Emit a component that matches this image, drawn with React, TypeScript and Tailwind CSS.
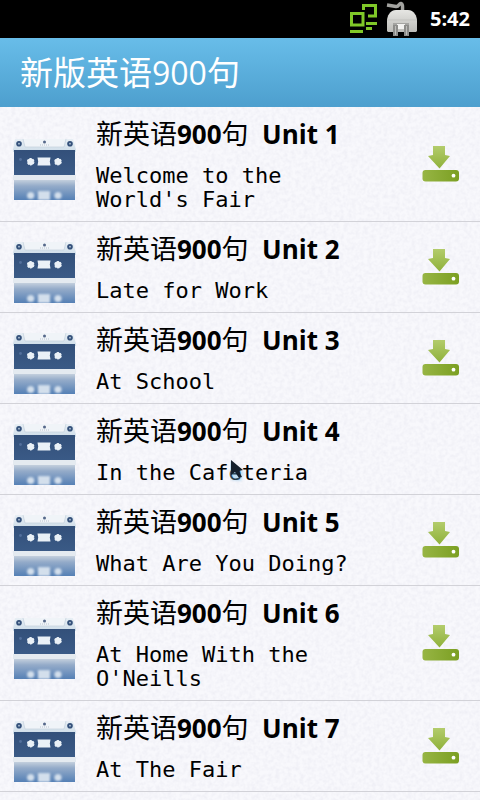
type Unit = {
  id: number;
  subtitle: string;
  downloaded?: boolean;
};

const UNITS: Unit[] = [
  { id: 1, subtitle: "Welcome to the World's Fair" },
  { id: 2, subtitle: "Late for Work" },
  { id: 3, subtitle: "At School" },
  { id: 4, subtitle: "In the Cafeteria", downloaded: true },
  { id: 5, subtitle: "What Are You Doing?" },
  { id: 6, subtitle: "At Home With the O'Neills" },
  { id: 7, subtitle: "At The Fair" },
];

// Gradients shared by every row's icons
const SharedDefs = () => (
  <svg className="absolute size-0" aria-hidden="true">
    <defs>
      <linearGradient id="shell" x1="0" y1="0" x2="0" y2="1">
        <stop offset="0" stopColor="#e8eff5" />
        <stop offset="1" stopColor="#cddce8" />
      </linearGradient>
      <linearGradient id="label" x1="0" y1="0" x2="0" y2="1">
        <stop offset="0" stopColor="#33507a" />
        <stop offset="1" stopColor="#3a5a86" />
      </linearGradient>
      <linearGradient id="mirror" x1="0" y1="0" x2="0" y2="1">
        <stop offset="0" stopColor="#c3cfdd" />
        <stop offset="0.3" stopColor="#94abc9" />
        <stop offset="1" stopColor="#5580b5" />
      </linearGradient>
      <linearGradient id="leaf" x1="0" y1="0" x2="0" y2="1">
        <stop offset="0" stopColor="#b3cc6c" />
        <stop offset="1" stopColor="#8fb13a" />
      </linearGradient>
      <linearGradient id="tray" x1="0" y1="0" x2="1" y2="0">
        <stop offset="0" stopColor="#97b544" />
        <stop offset="1" stopColor="#7b9f22" />
      </linearGradient>
      <linearGradient id="plug" x1="0" y1="0" x2="0" y2="1">
        <stop offset="0" stopColor="#e6e6e3" />
        <stop offset="1" stopColor="#bcbcb8" />
      </linearGradient>
      <filter id="soft" x="-50%" y="-50%" width="200%" height="200%">
        <feGaussianBlur stdDeviation="1" />
      </filter>
    </defs>
  </svg>
);

const PaperGrain = () => (
  <svg className="absolute inset-0 -z-10 size-full" aria-hidden="true">
    <filter id="grain" x="0" y="0" width="100%" height="100%">
      <feTurbulence type="fractalNoise" baseFrequency="0.25" numOctaves="3" seed="4" />
      <feColorMatrix values="0 0 0 0 0.76  0 0 0 0 0.76  0 0 0 0 0.84  0.8 0 0 0 -0.28" />
    </filter>
    <rect width="100%" height="100%" filter="url(#grain)" />
  </svg>
);

const Cassette = () => (
  <svg className="h-[72px] w-16 shrink-0" viewBox="0 0 64 72" aria-hidden="true">
    <path d="M3 11h58l3 11v2H1v-2z" fill="url(#shell)" />
    <path d="M11 11l2 8h39l2-8" fill="#f0f4f8" stroke="#c3d0dc" strokeWidth="0.7" />
    <circle cx="7" cy="15.7" r="2.8" fill="#34507a" />
    <circle cx="7" cy="15.7" r="0.9" fill="#b4c6d8" />
    <circle cx="58" cy="15.7" r="2.8" fill="#34507a" />
    <circle cx="58" cy="15.7" r="0.9" fill="#b4c6d8" />
    <circle cx="32.5" cy="14" r="1.5" fill="#55688a" />
    <path d="M28 17h9" stroke="#b9c4d0" strokeDasharray="1 1" />
    <path d="M2 22h61v25H2z" fill="url(#label)" />
    <circle cx="8.5" cy="31.5" r="1.4" fill="#53709c" />
    <circle cx="18.7" cy="33.7" r="3.2" fill="#eaf1f7" stroke="#eaf1f7" strokeWidth="1.2" strokeDasharray="2.2 1.15" />
    <circle cx="46" cy="33.7" r="3.2" fill="#eaf1f7" stroke="#eaf1f7" strokeWidth="1.2" strokeDasharray="2.2 1.15" />
    <path d="M25.500 29.5h13l-.7 4 .7 4h-13l.7-4z" fill="#eaf1f7" />
    <path d="M1 47h63v5H1z" fill="#e4eaf0" />
    <path d="M2 52h61v20H2z" fill="url(#mirror)" />
    <g fill="#d3dfec" filter="url(#soft)">
      <circle cx="18.7" cy="67.5" r="3.6" />
      <circle cx="46" cy="67.5" r="3.6" />
      <path d="M26 63h12v9H26z" />
    </g>
  </svg>
);

const DownloadIcon = () => (
  <svg className="h-9 w-[38px]" viewBox="0 0 38 36" aria-hidden="true">
    <rect x="0.5" y="24" width="36.5" height="11.5" rx="3" fill="url(#tray)" />
    <path d="M11 0h12v9l5 1-10.5 12.5L6 10l5-1z" fill="url(#leaf)" />
    <circle cx="31.5" cy="29.7" r="1.9" fill="#fff" />
  </svg>
);

const NetworkIcon = () => (
  <svg className="h-[38px] w-8" viewBox="0 0 32 38" fill="none" stroke="#80c828" strokeWidth="3" aria-hidden="true">
    <path d="M15.5 10V5.5h12V16H20" />
    <path d="M3.5 13.5H15V25H3.5z" />
    <path d="M18 23.500h11M2 31.500h13M18 28.500h6" />
  </svg>
);

const PlugIcon = () => (
  <svg className="h-[38px] w-8" viewBox="0 0 32 38" aria-hidden="true">
    <path d="M1 5l9 1.5c3 .5 3-3.5 5-3 2 .5 1.5 3.5 1.5 8" fill="none" stroke="#a3a3a0" strokeWidth="3.5" />
    <path d="M2 32l-1-1V21c0-5 3-11 9-11h12c6 0 9 6 9 11v10l-1 1z" fill="url(#plug)" />
    <path d="M1 20h30" stroke="#c3c3bf" />
    <path d="M7 23h16v3H7z" fill="#a5a5a2" />
    <path d="M11 24h8v5h-8z" fill="#f2f2f0" />
    <path d="M7 25h5v11H7zM18 25h5v11h-5z" fill="#8d8d8a" />
    <path d="M9 26h1v9H9zM20 26h1v9h-1z" fill="#bdbdba" />
  </svg>
);

const Pointer = () => (
  <svg className="absolute -top-1 left-[134px] h-8 w-6" viewBox="0 0 24 32" aria-hidden="true">
    <path d="M0 4l14 12-3 8-9-1-4-5z" fill="#6fb9e6" opacity="0.4" filter="url(#soft)" />
    <path d="M1 3v15l4-3 4 6 3-1-3-6 4-1z" fill="#14202c" />
  </svg>
);

const StatusBar = () => (
  <div className="flex h-[38px] items-center justify-end bg-black pr-[10px]">
    <NetworkIcon />
    <span className="ml-1.5">
      <PlugIcon />
    </span>
    <time className="ml-3 text-xl font-bold text-white">5:42</time>
  </div>
);

const UnitRow = ({ unit }: { unit: Unit }) => (
  <li className="flex items-center border-b border-[#d2d2d8] py-[9px] pr-[20px] pl-3">
    <Cassette />
    <div className="ml-5 flex min-w-0 flex-1 flex-col gap-3">
      <h2 className="text-[26px] leading-9 font-bold whitespace-pre">
        <span className="text-[27px] font-normal">新英语</span>900<span className="text-[27px] font-normal">句</span>
        {`  Unit ${unit.id}`}
      </h2>
      <p className="relative max-w-[270px] font-['DejaVu_Sans_Mono',monospace] text-[22px] leading-6">
        {unit.subtitle}
        {unit.downloaded && <Pointer />}
      </p>
    </div>
    {!unit.downloaded && (
      <button type="button" aria-label={`Download Unit ${unit.id}`}>
        <DownloadIcon />
      </button>
    )}
  </li>
);

const App = () => {
  return (
    <div className="min-h-screen bg-[#f8f8fc] font-['Open_Sans','Noto_Sans_CJK_SC',sans-serif] text-black">
      <SharedDefs />
      <StatusBar />
      <header className="flex h-[69px] items-center bg-linear-to-b from-[#68bde9] to-[#4d9fce] px-5">
        <h1 className="text-[33px] leading-10 text-white">
          新版英语<span className="text-[32px]">900</span>句
        </h1>
      </header>
      <main className="relative isolate pb-2">
        <PaperGrain />
        <ul>
          {UNITS.map((unit) => (
            <UnitRow key={unit.id} unit={unit} />
          ))}
        </ul>
      </main>
    </div>
  );
};

export default App;
